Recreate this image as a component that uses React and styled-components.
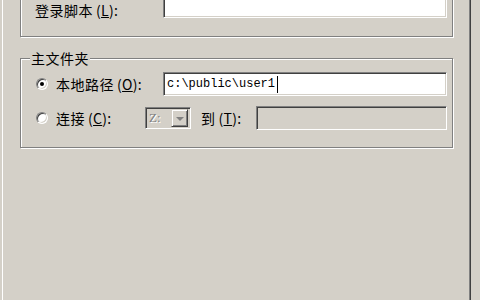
import React from 'react';
import styled, { createGlobalStyle } from 'styled-components';

const GlobalStyle = createGlobalStyle`
html,body{margin:0;padding:0;background:#d4d0c8;overflow:hidden;}
*{box-sizing:border-box;}
`;

const Screen = styled.div`
width:480px;
height:300px;
display:flex;
padding-left:2px;
background:#d4d0c8;
overflow:hidden;
font-family:"Noto Sans CJK SC","Noto Sans",sans-serif;
font-size:14px;
color:#000;
`;

const TabPage = styled.div`
width:469px;
height:300px;
border-left:1px solid #fff;
border-right:1px solid #404040;
box-shadow:inset -1px 0 0 #808080;
padding-left:17px;
`;

const Group = styled.div`
position:relative;
width:433px;
margin-top:${(p) => p.$top}px;
padding:${(p) => p.$pad};
border:1px solid #808080;
box-shadow:1px 1px 0 #fff, inset 1px 1px 0 #fff;
`;

const Legend = styled.span`
position:absolute;
top:-9px;
left:9px;
padding:0 1px;
background:#d4d0c8;
line-height:16px;
letter-spacing:0.5px;
`;

const Row = styled.div`
display:flex;
align-items:center;
height:24px;
margin-top:${(p) => p.$gap || 0}px;
`;

const Label = styled.span`
width:${(p) => p.$w}px;
flex:none;
white-space:nowrap;
letter-spacing:0.5px;
line-height:16px;
padding-top:${(p) => p.$dy || 0}px;
`;

const Key = styled.span`
margin-left:3px;
letter-spacing:0.3px;
`;

const Radio = styled.span`
position:relative;
flex:none;
width:12px;
height:12px;
margin-right:8px;
border-radius:50%;
border:1px solid;
border-color:#808080 #fff #fff #808080;
box-shadow:inset 1px 1px 0 #404040, inset -1px -1px 0 #d4d0c8;
background:#fff;
&::after{
  content:"";
  display:${(p) => (p.$checked ? 'block' : 'none')};
  position:absolute;
  left:3px;
  top:3px;
  width:4px;
  height:4px;
  border-radius:50%;
  background:#000;
}
`;

const Field = styled.div`
flex:none;
width:${(p) => p.$w}px;
height:${(p) => p.$h || 24}px;
display:flex;
align-items:center;
padding-left:3px;
border:1px solid;
border-color:#808080 #fff #fff #808080;
box-shadow:inset 1px 1px 0 #404040, inset -1px -1px 0 #d4d0c8;
background:${(p) => (p.$disabled ? '#d4d0c8' : '#fff')};
font-family:"Liberation Mono",monospace;
font-size:12px;
`;

const Caret = styled.span`
width:1px;
height:17px;
margin-left:2px;
background:#000;
`;

const Combo = styled(Field)`
width:46px;
height:22px;
padding:0 2px 0 3px;
justify-content:space-between;
background:#d4d0c8;
`;

const ComboText = styled.span`
font-family:"Liberation Serif",serif;
font-size:13px;
color:#808080;
text-shadow:1px 1px 0 #fff;
`;

const DropButton = styled.span`
width:17px;
height:18px;
display:flex;
align-items:center;
justify-content:center;
border:1px solid;
border-color:#d4d0c8 #404040 #404040 #d4d0c8;
box-shadow:inset 1px 1px 0 #fff, inset -1px -1px 0 #808080;
&::after{
  content:"";
  border-left:4px solid transparent;
  border-right:4px solid transparent;
  border-top:4px solid #808080;
  margin-top:1px;
}
`;

const ToLabel = styled(Label)`
margin-left:10px;
`;

export default function App() {
  return (
    <Screen>
      <GlobalStyle />
      <TabPage>
        <Group $top={-30} $pad="23px 5px 18px 14px">
          <Row>
            <Label $w={128} $dy={7}>登录脚本<Key>(<u>L</u>):</Key></Label>
            <Field $w={284} />
          </Row>
        </Group>
        <Group $top={21} $pad="13px 5px 17px 15px">
          <Legend>主文件夹</Legend>
          <Row>
            <Radio $checked />
            <Label $w={107}>本地路径<Key>(<u>O</u>):</Key></Label>
            <Field $w={284}>c:\public\user1<Caret /></Field>
          </Row>
          <Row $gap={10}>
            <Radio />
            <Label $w={89}>连接<Key>(<u>C</u>):</Key></Label>
            <Combo>
              <ComboText>Z:</ComboText>
              <DropButton />
            </Combo>
            <ToLabel $w={55}>到<Key>(<u>T</u>):</Key></ToLabel>
            <Field $w={191} $disabled />
          </Row>
        </Group>
      </TabPage>
    </Screen>
  );
}
